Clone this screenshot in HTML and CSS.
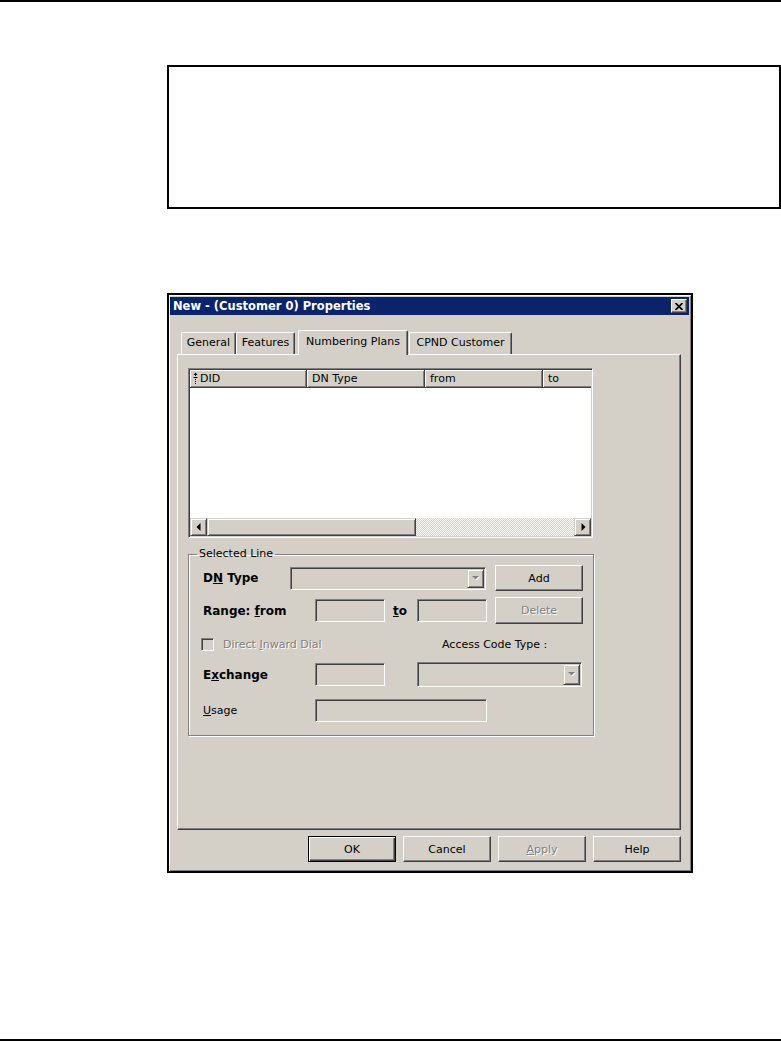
FILE: index.html
```html
<!DOCTYPE html>
<html lang="en">
<head>
  <meta charset="UTF-8" />
  <title>New - (Customer 0) Properties</title>
  <link rel="stylesheet" href="styles.css">
</head>
<body>

<div class="page-rule"></div>

<div class="note-box"></div>

<div class="dialog">
  <div class="titlebar">
    <span class="title">New - (Customer 0) Properties</span>
    <span class="close-btn">
      <svg width="8" height="7" viewBox="0 0 8 7"><path d="M0.5 0 L7.5 7 M7.5 0 L0.5 7" stroke="#000" stroke-width="1.7"/></svg>
    </span>
  </div>

  <div class="tabs">
    <div class="tab tab-general">General</div>
    <div class="tab tab-features">Features</div>
    <div class="tab tab-numbering active">Numbering Plans</div>
    <div class="tab tab-cpnd">CPND Customer</div>
  </div>

  <div class="tab-panel">
    <!-- list of numbering plan lines -->
    <div class="listview">
      <div class="lv-header">
        <div class="lv-col col-did">
          <svg class="sort-icon" width="5" height="13" viewBox="0 0 5 13">
            <path d="M2.5 0.5 L0.5 3 L4.5 3 Z" fill="#000"/>
            <path d="M2.5 3 L2.5 13" stroke="#000" stroke-width="1" stroke-dasharray="1 1"/>
            <path d="M0.5 5.5 L4.5 5.5" stroke="#000" stroke-width="1"/>
          </svg>
          DID
        </div>
        <div class="lv-col col-type">DN Type</div>
        <div class="lv-col col-from">from</div>
        <div class="lv-col col-to">to</div>
      </div>
      <div class="lv-body"></div>
      <div class="hscroll">
        <div class="sb-btn">
          <svg width="8" height="8" viewBox="0 0 8 8"><path d="M5.5 0 L5.5 8 L1.5 4 Z" fill="#000"/></svg>
        </div>
        <div class="sb-thumb"></div>
        <div class="sb-track"></div>
        <div class="sb-btn">
          <svg width="8" height="8" viewBox="0 0 8 8"><path d="M2.5 0 L2.5 8 L6.5 4 Z" fill="#000"/></svg>
        </div>
      </div>
    </div>

    <fieldset class="group">
      <legend>Selected Line</legend>

      <div class="row row-type">
        <span class="label bold lbl-type">D<u>N</u> Type</span>
        <div class="field combo combo-type">
          <div class="combo-btn">
            <svg width="8" height="5" viewBox="0 0 8 5"><path d="M1 1 L8 1 L4.5 4.5 Z" fill="#fff"/><path d="M0 0 L7 0 L3.5 3.5 Z" fill="#808080"/></svg>
          </div>
        </div>
        <button class="btn btn-side">Add</button>
      </div>

      <div class="row row-range">
        <span class="label bold lbl-wide">Range: <u>f</u>rom</span>
        <div class="field field-short"></div>
        <span class="label bold lbl-to"><u>t</u>o</span>
        <div class="field field-short"></div>
        <button class="btn btn-side" disabled>Delete</button>
      </div>

      <div class="row row-dial">
        <div class="chk-group">
          <span class="check"></span>
          <span class="dial-label">Direct <u>I</u>nward Dial</span>
        </div>
        <span class="label">Access Code Type :</span>
      </div>

      <div class="row row-exchange">
        <span class="label bold lbl-wide">E<u>x</u>change</span>
        <div class="field field-short"></div>
        <div class="field combo combo-access">
          <div class="combo-btn">
            <svg width="8" height="5" viewBox="0 0 8 5"><path d="M1 1 L8 1 L4.5 4.5 Z" fill="#fff"/><path d="M0 0 L7 0 L3.5 3.5 Z" fill="#808080"/></svg>
          </div>
        </div>
      </div>

      <div class="row row-usage">
        <span class="label lbl-wide"><u>U</u>sage</span>
        <div class="field field-usage"></div>
      </div>
    </fieldset>
  </div>

  <div class="buttons">
    <button class="btn default">OK</button>
    <button class="btn">Cancel</button>
    <button class="btn" disabled><u>A</u>pply</button>
    <button class="btn">Help</button>
  </div>
</div>

<div class="page-rule bottom"></div>

</body>
</html>
```

FILE: styles.css
```css
body {
  margin: 0;
  background: #fff;
  color: #000;
  font-family: "DejaVu Sans", "Liberation Sans", sans-serif;
  font-size: 11px;
}

.page-rule {
  height: 2px;
  background: #000;
}

.page-rule.bottom {
  margin-top: 166px;
}

.note-box {
  box-sizing: border-box;
  width: 614px;
  height: 144px;
  margin: 63px 0 0 167px;
  border: 2px solid #000;
}

/* dialog window */
.dialog {
  box-sizing: border-box;
  width: 526px;
  height: 580px;
  margin: 84px 0 0 167px;
  border: 2px solid #000;
  background: #d4d0c8;
  box-shadow: inset 1px 1px #fff, inset -1px -1px #808080;
}

.titlebar {
  display: flex;
  align-items: center;
  justify-content: space-between;
  height: 18px;
  margin: 2px 2px 0 1px;
  padding-left: 3px;
  background: #0a246a;
  color: #fff;
  font-weight: bold;
  font-size: 11.5px;
}

.close-btn {
  box-sizing: border-box;
  display: flex;
  align-items: center;
  justify-content: center;
  width: 16px;
  height: 14px;
  margin-right: 2px;
  background: #d4d0c8;
  border: 1px solid;
  border-color: #fff #404040 #404040 #fff;
  box-shadow: inset -1px -1px #808080;
}

/* tabs */
.tabs {
  display: flex;
  align-items: flex-end;
  height: 24px;
  margin: 15px 10px 0 8px;
  padding-left: 4px;
}

.tab {
  box-sizing: border-box;
  height: 22px;
  line-height: 20px;
  text-align: center;
  white-space: nowrap;
  border: 1px solid #fff;
  border-bottom: none;
  border-right-color: #404040;
  border-radius: 2px 2px 0 0;
  box-shadow: inset -1px 0 #808080;
}

.tab-general { width: 55px; }
.tab-features { width: 59px; }
.tab-numbering { width: 110px; margin-left: 3px; }
.tab-cpnd { width: 103px; margin-left: 1px; }

.tab.active {
  position: relative;
  z-index: 1;
  height: 25px;
  margin-bottom: -1px;
  line-height: 22px;
  background: #d4d0c8;
}

.tab-panel {
  box-sizing: border-box;
  height: 476px;
  margin: 0 10px 0 8px;
  padding: 13px 0 0 10px;
  border: 1px solid #fff;
  border-right-color: #404040;
  border-bottom-color: #404040;
  box-shadow: inset -1px -1px #808080;
}

/* list view */
.listview {
  box-sizing: border-box;
  display: flex;
  flex-direction: column;
  width: 405px;
  height: 170px;
  padding: 1px;
  background: #fff;
  border: 1px solid;
  border-color: #808080 #fff #fff #808080;
  box-shadow: inset 1px 1px #404040, inset -1px -1px #d4d0c8;
}

.lv-header {
  display: flex;
  flex: none;
  height: 18px;
  overflow: hidden;
}

.lv-col {
  box-sizing: border-box;
  flex: none;
  display: flex;
  align-items: center;
  height: 18px;
  padding-left: 5px;
  background: #d4d0c8;
  border-right: 1px solid #404040;
  border-bottom: 1px solid #404040;
  box-shadow: inset 1px 1px #fff, inset -1px -1px #808080;
  white-space: nowrap;
}

.col-did { width: 117px; padding-left: 3px; gap: 2px; }
.col-type { width: 118px; }
.col-from { width: 118px; }
.col-to { width: 118px; }

.lv-body {
  flex: 1;
}

.hscroll {
  display: flex;
  flex: none;
  height: 18px;
}

.sb-btn,
.sb-thumb {
  box-sizing: border-box;
  display: flex;
  align-items: center;
  justify-content: center;
  background: #d4d0c8;
  border: 1px solid;
  border-color: #d4d0c8 #404040 #404040 #d4d0c8;
  box-shadow: inset 1px 1px #fff, inset -1px -1px #808080;
}

.sb-btn { width: 17px; }
.sb-thumb { width: 209px; }

.sb-track {
  flex: 1;
  background-color: #fff;
  background-image: repeating-conic-gradient(#d4d0c8 0 25%, #fff 0 50%);
  background-size: 2px 2px;
}

/* group box */
.group {
  box-sizing: border-box;
  width: 406px;
  min-width: 0;
  margin: 9px 0 0;
  padding: 0 8px 13px;
  border: 1px solid #808080;
  box-shadow: inset 1px 1px #fff, 1px 1px #fff;
}

.group legend {
  padding: 0 2px;
  line-height: 14px;
}

.row {
  display: flex;
  align-items: center;
  padding-left: 6px;
}

.row-type { height: 26px; margin-top: 4px; }
.row-range { height: 27px; margin-top: 6px; }
.row-dial { height: 15px; margin-top: 13px; }
.row-exchange { height: 25px; margin-top: 10px; }
.row-usage { height: 23px; margin-top: 12px; }

.label {
  flex: none;
  white-space: nowrap;
}

.label.bold {
  font-weight: bold;
  font-size: 12px;
}

.lbl-type { width: 87px; }
.lbl-wide { width: 112px; }
.lbl-to { width: 24px; margin-left: 8px; }

.field {
  box-sizing: border-box;
  flex: none;
  height: 23px;
  background: #d4d0c8;
  border: 1px solid;
  border-color: #808080 #fff #fff #808080;
  box-shadow: inset 1px 1px #404040, inset -1px -1px #d4d0c8;
}

.field-short { width: 70px; }
.field-usage { width: 172px; }

.combo {
  display: flex;
  justify-content: flex-end;
  padding: 1px;
}

.combo-type { width: 196px; }
.combo-access { width: 165px; height: 25px; margin-left: 32px; }

.combo-btn {
  box-sizing: border-box;
  display: flex;
  align-items: center;
  justify-content: center;
  width: 17px;
  background: #d4d0c8;
  border: 1px solid;
  border-color: #d4d0c8 #404040 #404040 #d4d0c8;
  box-shadow: inset 1px 1px #fff, inset -1px -1px #808080;
}

.chk-group {
  display: flex;
  align-items: center;
  width: 241px;
  margin-left: -2px;
}

.check {
  box-sizing: border-box;
  width: 13px;
  height: 13px;
  background: #d4d0c8;
  border: 1px solid;
  border-color: #808080 #fff #fff #808080;
  box-shadow: inset 1px 1px #404040, inset -1px -1px #d4d0c8;
}

.dial-label {
  margin-left: 9px;
  color: #808080;
  text-shadow: 1px 1px #fff;
}

/* push buttons */
.btn {
  box-sizing: border-box;
  width: 88px;
  height: 26px;
  padding: 0;
  font: inherit;
  color: #000;
  text-align: center;
  background: #d4d0c8;
  border: 1px solid;
  border-color: #fff #404040 #404040 #fff;
  border-radius: 0;
  box-shadow: inset -1px -1px #808080;
}

.btn.default {
  border-color: #000;
  box-shadow: inset 1px 1px #fff, inset -1px -1px #404040, inset -2px -2px #808080;
}

.btn:disabled {
  color: #808080;
  text-shadow: 1px 1px #fff;
}

.btn-side {
  margin-left: 9px;
}

.row-range .btn-side {
  margin-left: 8px;
  height: 27px;
}

.buttons {
  display: flex;
  justify-content: flex-end;
  gap: 7px;
  margin: 6px 10px 0 0;
}
```
